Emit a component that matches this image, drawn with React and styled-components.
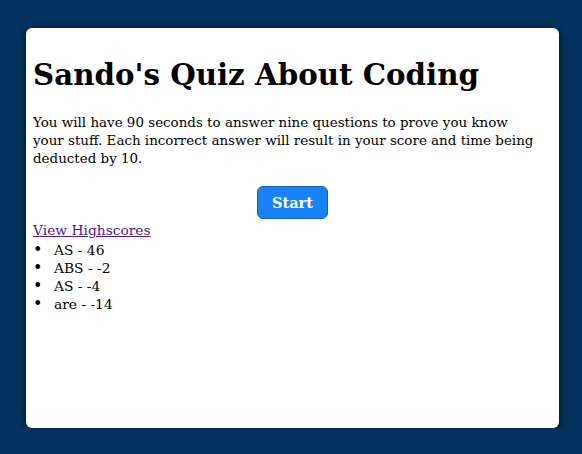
import React from "react";
import styled, { createGlobalStyle } from "styled-components";

const Global = createGlobalStyle`
  html, body { margin: 0; padding: 0; }
  body {
    background: #04325f;
    font-family: "DejaVu Serif", Georgia, serif;
    color: #000;
  }
`;

const Page = styled.main`
  display: flex;
  padding: 28px 0 0 26px;
`;

const Card = styled.section`
  box-sizing: border-box;
  width: 533px;
  height: 400px;
  background: #fff;
  border-radius: 6px;
  box-shadow: 0 2px 8px rgba(0, 0, 0, 0.75);
  padding: 29px 7px 0;
`;

const Title = styled.h1`
  margin: 0 0 21px;
  font-size: 29.3px;
  line-height: 36px;
  font-weight: bold;
`;

const Intro = styled.p`
  max-width: 505px;
  margin: 0 0 18px;
  font-size: 13.45px;
  line-height: 18px;
`;

const Actions = styled.div`
  display: flex;
  justify-content: center;
  margin-bottom: 2px;
`;

const StartButton = styled.button`
  height: 33px;
  padding: 0 14.5px;
  background: #1a82f7;
  color: #fff;
  border: 1px solid #1c5fb0;
  border-radius: 6px;
  font-family: "DejaVu Serif", Georgia, serif;
  font-weight: bold;
  font-size: 14.5px;
  cursor: pointer;
`;

const HighscoreLink = styled.a`
  display: block;
  font-size: 13.8px;
  line-height: 19px;
  margin-bottom: 1px;
  color: #551a8b;
  text-decoration: underline;
`;

const ScoreList = styled.ul`
  margin: 0;
  padding: 0;
  list-style: none;
`;

const ScoreItem = styled.li`
  display: flex;
  font-size: 13.8px;
  line-height: 18px;

  &::before {
    content: "•";
    flex: 0 0 21px;
    font-size: 16px;
  }
`;

const scores = [
  ["AS", 46],
  ["ABS", -2],
  ["AS", -4],
  ["are", -14],
];

export default function App() {
  return (
    <>
      <Global />
      <Page>
        <Card>
          <Title>Sando's Quiz About Coding</Title>
          <Intro>
            You will have 90 seconds to answer nine questions to prove you know
            your stuff. Each incorrect answer will result in your score and time
            being deducted by 10.
          </Intro>
          <Actions>
            <StartButton>Start</StartButton>
          </Actions>
          <HighscoreLink href="#">View Highscores</HighscoreLink>
          <ScoreList>
            {scores.map(([name, score], i) => (
              <ScoreItem key={i}>
                {name} - {score}
              </ScoreItem>
            ))}
          </ScoreList>
        </Card>
      </Page>
    </>
  );
}
